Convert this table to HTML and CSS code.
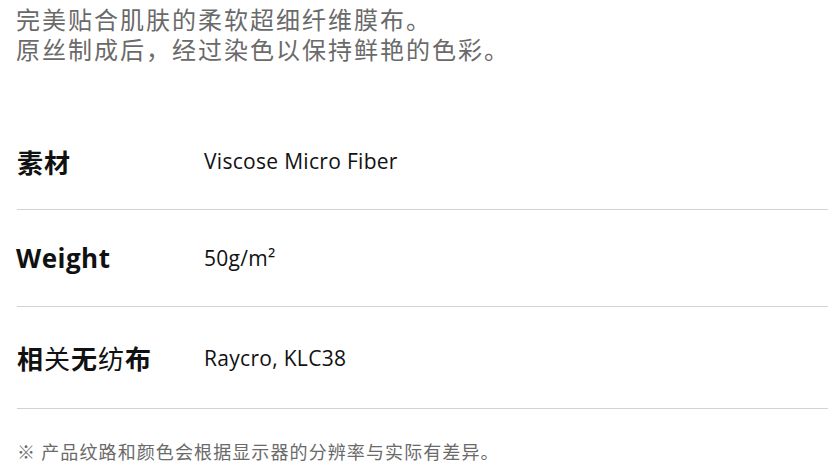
FILE: index.html
```html
<!DOCTYPE html>
<html lang="zh-CN">
<head>
<meta charset="utf-8">
<title>素材</title>
<link rel="stylesheet" href="styles.css">
</head>
<body>
<div class="page">
  <p class="intro">完美贴合肌肤的柔软超细纤维膜布。<br>原丝制成后，经过染色以保持鲜艳的色彩。</p>
  <div class="specs">
    <div class="row">
      <div class="label">素材</div>
      <div class="value">Viscose Micro Fiber</div>
    </div>
    <div class="row">
      <div class="label latin">Weight</div>
      <div class="value">50g/m²</div>
    </div>
    <div class="row tall">
      <div class="label">相<span class="fallback">关</span>无<span class="fallback">纺</span>布</div>
      <div class="value">Raycro, KLC38</div>
    </div>
  </div>
  <p class="note">※ 产品纹路和颜色会根据显示器的分辨率与实际有差异。</p>
</div>
</body>
</html>
```
FILE: styles.css
```css
html, body {
  margin: 0;
  padding: 0;
  background: #ffffff;
}
body {
  font-family: "Open Sans", "Noto Sans CJK SC", sans-serif;
  color: #111111;
}
.page {
  padding: 0 11px 0 16px;
}
.intro {
  margin: 0;
  padding-top: 4px;
  font-family: "Noto Sans CJK SC", sans-serif;
  font-size: 24px;
  letter-spacing: 2px;
  line-height: 30px;
  color: #6a6a6a;
}
.specs {
  margin-top: 49px;
  margin-left: 1px;
}
.row {
  display: grid;
  grid-template-columns: 187px 1fr;
  align-items: center;
  height: 96px;
  border-bottom: 1px solid #d2d2d2;
}
.row.tall {
  height: 101px;
}
.label {
  font-family: "Noto Sans CJK SC", sans-serif;
  font-size: 26px;
  font-weight: 700;
  letter-spacing: 1px;
  color: #111111;
}
.label.latin {
  font-family: "Open Sans", sans-serif;
  letter-spacing: 0.5px;
  margin-left: -1px;
}
.fallback {
  font-weight: 400;
}
.value {
  font-size: 21px;
  letter-spacing: 0.3px;
  color: #111111;
}
.note {
  margin: 30px 0 0 1px;
  font-family: "Noto Sans CJK SC", sans-serif;
  font-size: 18px;
  letter-spacing: 1.1px;
  line-height: 24px;
  color: #6a6a6a;
}
```
